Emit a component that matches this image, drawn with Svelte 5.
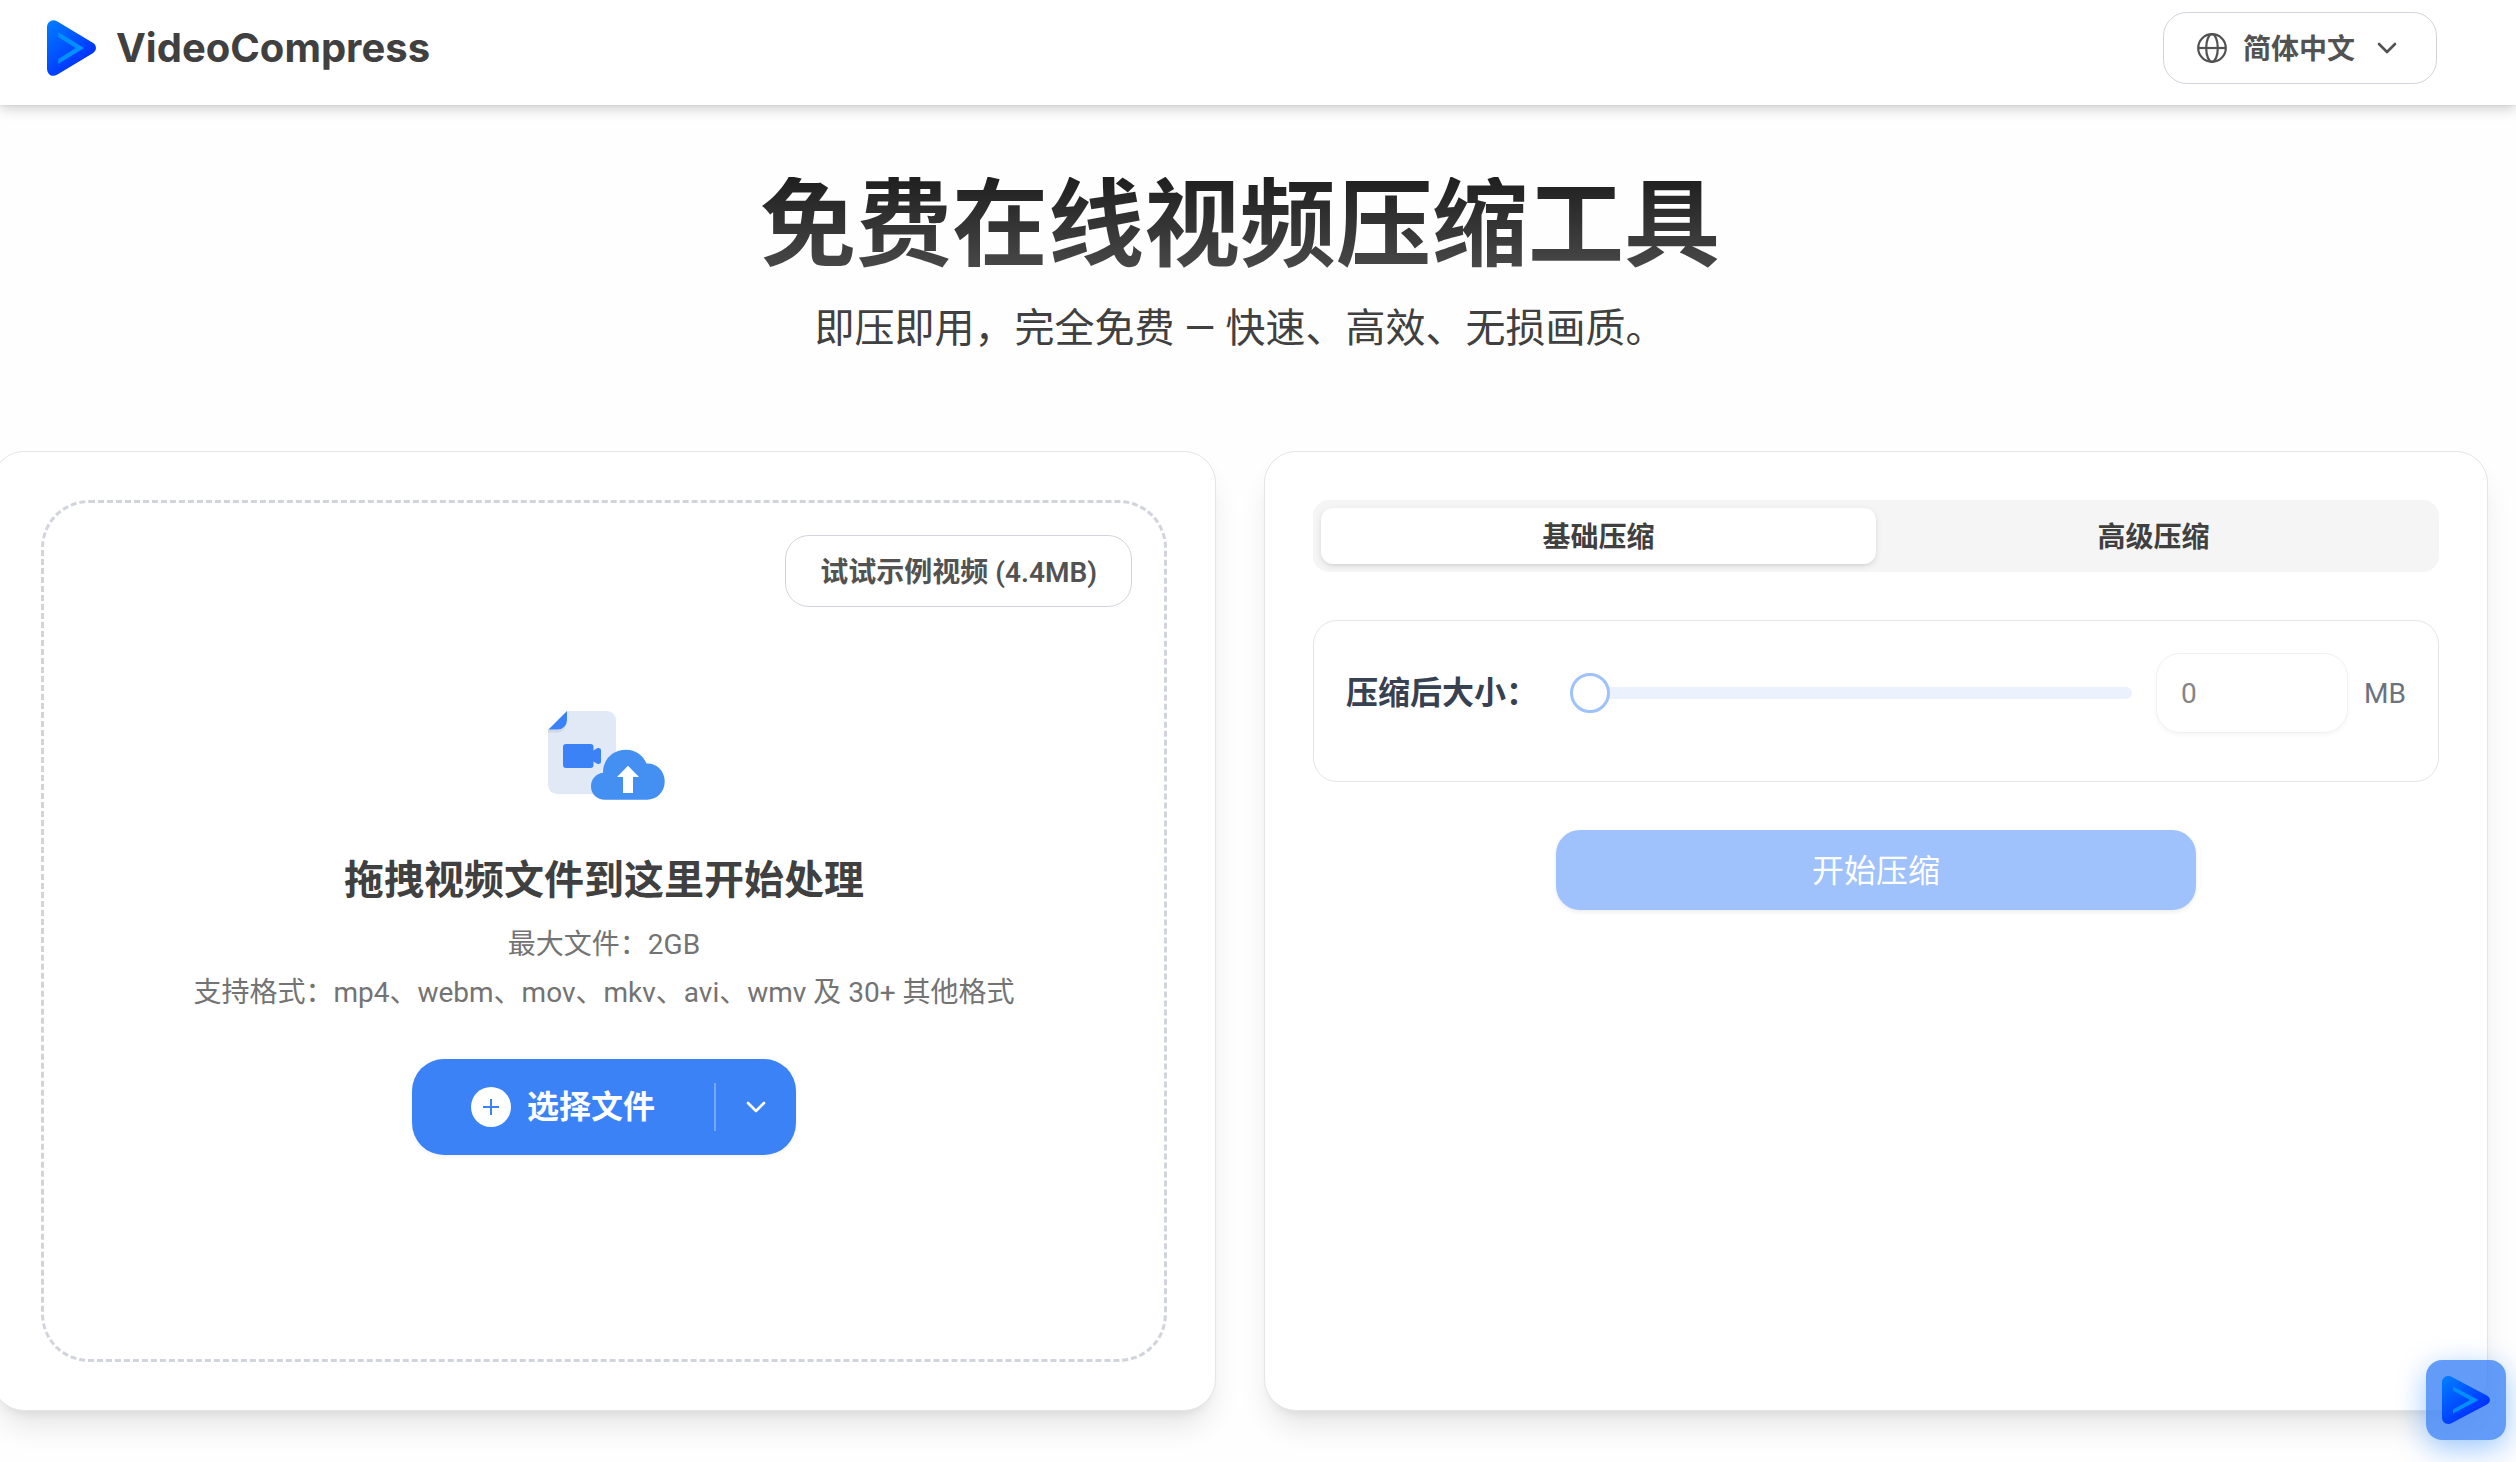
<script>
  let tab = $state('basic');
  let size = $state(0);
  const tabs = [
    { id: 'basic', label: '基础压缩' },
    { id: 'advanced', label: '高级压缩' }
  ];
</script>

{#snippet logo(id)}
  <svg class="logo" viewBox="0 0 48 48" preserveAspectRatio="none" aria-hidden="true">
    <defs>
      <linearGradient id={id} x1="0" y1="0" x2="0.75" y2="1">
        <stop offset="0" stop-color="#0080ff" />
        <stop offset="1" stop-color="#0022ff" />
      </linearGradient>
    </defs>
    <path d="M0 6.5C0 1.3 5.2-1.4 9.8 1L44.8 19.6C49 21.8 49 26.2 44.8 28.4L9.8 47C5.2 49.4 0 46.7 0 41.5Z" fill="url(#{id})" />
    <path d="M11 10.5L36.5 24L11 37.5V33.4L28 24L11 14.6Z" fill="#0090ff" />
  </svg>
{/snippet}

{#snippet chevron()}
  <svg class="chevron" viewBox="0 0 20 12" fill="none" stroke="currentColor" stroke-width="2.6" stroke-linecap="round" stroke-linejoin="round" aria-hidden="true">
    <path d="M2 2L10 10L18 2" />
  </svg>
{/snippet}

<div class="page">
  <header>
    <a class="brand" href="/">{@render logo('brand-fill')}<span>VideoCompress</span></a>
    <button class="outline" type="button">
      <svg class="globe" viewBox="0 0 30 30" fill="none" stroke="currentColor" stroke-width="2.2" aria-hidden="true">
        <circle cx="15" cy="15" r="13.800" />
        <ellipse cx="15" cy="15" rx="5.800" ry="13.800" />
        <path d="M1.200 15H28.800" />
      </svg>
      <span>简体中文</span>
      {@render chevron()}
    </button>
  </header>

  <main>
    <section class="hero">
      <h1>免费在线视频压缩工具</h1>
      <p>即压即用，完全免费 — 快速、高效、无损画质。</p>
    </section>

    <div class="cards">
      <section class="card">
        <div class="drop">
          <button class="outline sample" type="button"><span>试试示例视频 (4.4MB)</span></button>
          <svg class="art" viewBox="0 0 128 96" aria-hidden="true">
            <path d="M27 4H67A9 9 0 0 1 76 13V78A9 9 0 0 1 67 87H17A9 9 0 0 1 8 78V23Z" fill="#e1e8f6" />
            <path d="M8 22.5H20L26 17C25 22 22 25.6 17 25.6H8Z" fill="#cfd8e3" />
            <path d="M27 4V13A9.5 9.5 0 0 1 17.500 22.500H8.500Z" fill="#3b82f6" />
            <path d="M26 37H50.500A3 3 0 0 1 53.500 40V43.500L57 41.200Q61 40.500 61 43V55Q61 57.500 57 56.800L53.500 54.500V58A3 3 0 0 1 50.500 61H26A3 3 0 0 1 23 58V40A3 3 0 0 1 26 37Z" fill="#3b82f6" />
            <path d="M65 92.700C57 92.700 51 87 51 79.500C51 72 56 66.500 63 65.700C63 52 73 42.700 86 42.700C95.500 42.700 103 48 106.500 56.500C117 56 124.700 64 124.700 74.500C124.700 85 117 92.700 107 92.700Z" fill="#438ff2" />
            <path d="M88 58.700L99 70H93V86H83V70H77Z" fill="#fff" />
          </svg>
          <h2>拖拽视频文件到这里开始处理</h2>
          <p class="hint">最大文件：2GB</p>
          <p class="hint">支持格式：mp4、webm、mov、mkv、avi、wmv 及 30+ 其他格式</p>
          <div class="choose">
            <button class="pick" type="button">
              <svg viewBox="0 0 40 40" aria-hidden="true">
                <circle cx="20" cy="20" r="20" fill="#fff" />
                <path d="M12 20H28M20 12V28" stroke="#3b82f6" stroke-width="2" />
              </svg>
              <span>选择文件</span>
            </button>
            <i class="divider"></i>
            <button class="more" type="button" aria-label="更多来源">{@render chevron()}</button>
          </div>
        </div>
      </section>

      <section class="card">
        <div class="tabs" role="tablist">
          {#each tabs as t}
            <button type="button" role="tab" aria-selected={tab === t.id} class:active={tab === t.id} onclick={() => (tab = t.id)}>{t.label}</button>
          {/each}
        </div>
        <div class="panel">
          <label for="size-range">压缩后大小：</label>
          <input id="size-range" type="range" min="0" max="100" bind:value={size} disabled />
          <input class="amount" type="text" placeholder="0" aria-label="压缩后大小 (MB)" disabled />
          <span class="unit">MB</span>
        </div>
        <button class="start" type="button" disabled>开始压缩</button>
      </section>
    </div>
  </main>

  <button class="float" type="button" aria-label="VideoCompress">{@render logo('float-fill')}</button>
</div>

<style>
  :global(body) {
    margin: 0;
    background: #fefefe;
  }
  .page {
    display: flex;
    flex-direction: column;
    min-height: 100vh;
    box-sizing: border-box;
    overflow-x: clip;
    font-family: Roboto, 'Noto Sans CJK SC', sans-serif;
    font-size: 28px;
    color: #404040;
  }
  .page * {
    box-sizing: border-box;
  }
  button,
  input {
    font: inherit;
    color: inherit;
    margin: 0;
  }
  button {
    border: 0;
    padding: 0;
    background: none;
  }
  h1,
  h2,
  p {
    margin: 0;
  }
  svg {
    display: block;
    flex: none;
  }
  header {
    display: flex;
    align-items: center;
    justify-content: space-between;
    padding: 12px 79px 21px 47px;
    background: #fff;
    box-shadow: 0 0 2px rgba(0, 0, 0, 0.12), 0 4px 12px rgba(0, 0, 0, 0.18);
  }
  .brand {
    display: flex;
    align-items: center;
    gap: 20px;
    font-family: Inter, sans-serif;
    font-size: 40px;
    line-height: 56px;
    font-weight: 700;
    color: #404040;
    text-decoration: none;
  }
  .brand .logo {
    width: 49px;
    height: 56px;
  }
  .outline {
    display: flex;
    align-items: center;
    height: 72px;
    padding: 0 33px;
    border: 1px solid #d1d5db;
    border-radius: 24px;
    background: #fff;
    font-weight: 600;
    color: #525252;
    white-space: nowrap;
  }
  .outline span {
    padding-bottom: 2px;
  }
  .globe {
    width: 30px;
    height: 30px;
    margin-right: 16px;
  }
  .outline .chevron {
    margin: 0 6px 0 22px;
  }
  .chevron {
    width: 20px;
    height: 12px;
  }
  main {
    flex: 1;
    display: flex;
    flex-direction: column;
    margin: 0 28px 0 -8px;
    padding: 72px 0 51px;
  }
  .hero {
    display: flex;
    flex-direction: column;
    align-items: center;
    gap: 28px;
    padding-bottom: 94px;
  }
  h1 {
    font-size: 96px;
    line-height: 96px;
    font-weight: 700;
    background: linear-gradient(#1f1f1f, #4a4a4a);
    background-clip: text;
    color: transparent;
  }
  .hero p {
    font-size: 40px;
    line-height: 56px;
  }
  .cards {
    flex: 1;
    display: grid;
    grid-template-columns: 1fr 1fr;
    gap: 48px;
  }
  .card {
    display: flex;
    flex-direction: column;
    padding: 48px;
    border: 1px solid #e5e5e5;
    border-radius: 32px;
    background: #fff;
    box-shadow: 0 20px 30px -6px rgba(0, 0, 0, 0.1), 0 8px 12px -8px rgba(0, 0, 0, 0.1);
  }
  .drop {
    flex: 1;
    position: relative;
    display: flex;
    flex-direction: column;
    align-items: center;
    justify-content: center;
    border: 3px dashed #d1d5db;
    border-radius: 48px;
  }
  .sample {
    position: absolute;
    top: 32px;
    right: 32px;
    padding: 0 34px;
  }
  .art {
    width: 128px;
    height: 96px;
  }
  h2 {
    margin: 50px 0 12px;
    font-size: 40px;
    line-height: 56px;
    font-weight: 700;
  }
  .hint {
    line-height: 48px;
    color: #737373;
  }
  .choose {
    display: flex;
    align-items: center;
    width: 384px;
    height: 96px;
    margin-top: 42px;
    border-radius: 32px;
    background: #3b82f6;
    color: #fff;
    box-shadow: 0 2px 4px rgba(0, 0, 0, 0.05);
  }
  .pick {
    flex: 1;
    height: 96px;
    display: flex;
    align-items: center;
    justify-content: center;
    gap: 16px;
    font-size: 32px;
    line-height: 48px;
    font-weight: 700;
  }
  .pick svg {
    width: 40px;
    height: 40px;
  }
  .divider {
    width: 2px;
    height: 48px;
    background: #76a8f9;
  }
  .more {
    display: flex;
    align-items: center;
    justify-content: center;
    width: 80px;
    height: 96px;
  }
  .tabs {
    display: grid;
    grid-template-columns: 1fr 1fr;
    padding: 8px;
    border-radius: 16px;
    background: #f5f5f5;
  }
  .tabs button {
    height: 56px;
    padding-bottom: 2px;
    border-radius: 12px;
    font-weight: 600;
  }
  .tabs .active {
    background: #fff;
    box-shadow: 0 2px 6px rgba(0, 0, 0, 0.1), 0 2px 4px -2px rgba(0, 0, 0, 0.1);
  }
  .panel {
    display: flex;
    align-items: center;
    margin: 48px 0;
    padding: 32px 32px 48px;
    border: 1px solid #e5e5e5;
    border-radius: 24px;
  }
  .panel label {
    margin-right: 32px;
    font-size: 32px;
    line-height: 48px;
    font-weight: 600;
    color: #374151;
    white-space: nowrap;
  }
  input[type='range'] {
    appearance: none;
    flex: 1;
    min-width: 0;
    height: 12px;
    margin-right: 24px;
    border-radius: 6px;
    background: #ebf2fe;
  }
  input[type='range']::-webkit-slider-thumb {
    appearance: none;
    box-sizing: border-box;
    width: 40px;
    height: 40px;
    border: 3px solid #9fc1fc;
    border-radius: 50%;
    background: #fff;
  }
  .amount {
    width: 192px;
    height: 80px;
    padding: 0 24px;
    border: 1px solid #f1f1f1;
    border-radius: 24px;
    background: #fff;
    box-shadow: 0 2px 4px rgba(0, 0, 0, 0.04);
  }
  .amount::placeholder {
    color: #858585;
    opacity: 1;
  }
  .unit {
    margin-left: 16px;
    color: #6b7280;
  }
  .start {
    align-self: center;
    width: 640px;
    max-width: 100%;
    height: 80px;
    padding-bottom: 4px;
    border-radius: 24px;
    background: #9fc1fc;
    color: #fff;
    font-size: 32px;
    box-shadow: 0 2px 4px rgba(0, 0, 0, 0.08);
  }
  .float {
    position: fixed;
    right: 10px;
    bottom: 22px;
    display: grid;
    place-items: center;
    width: 80px;
    height: 80px;
    border-radius: 16px;
    background: rgba(59, 130, 246, 0.8);
    box-shadow: 0 8px 30px rgba(0, 118, 255, 0.4);
  }
  .float .logo {
    width: 48px;
    height: 48px;
  }
</style>
